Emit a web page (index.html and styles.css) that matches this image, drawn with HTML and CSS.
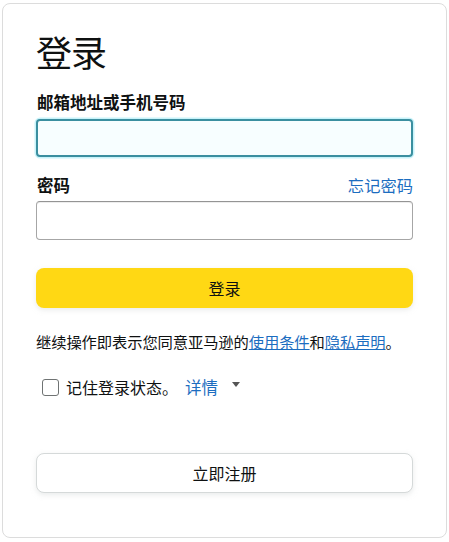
FILE: index.html
```html
<!DOCTYPE html>
<html lang="zh-CN">
<head>
<meta charset="utf-8">
<title>登录</title>
<link rel="stylesheet" href="styles.css">
</head>
<body>
<div class="card">
  <h1 class="title">登录</h1>
  <div class="field">
    <label class="label">邮箱地址或手机号码</label>
    <div class="input input-focus"></div>
  </div>
  <div class="field field-pw">
    <div class="label-row">
      <label class="label">密码</label>
      <a class="link forgot">忘记密码</a>
    </div>
    <div class="input"></div>
  </div>
  <div class="btn-primary">登录</div>
  <p class="terms">继续操作即表示您同意亚马逊的<a class="link ul">使用条件</a>和<a class="link ul">隐私声明</a>。</p>
  <div class="remember">
    <span class="checkbox"></span>
    <span class="remember-text">记住登录状态。</span>
    <a class="link details">详情</a>
    <span class="caret"></span>
  </div>
  <div class="btn-secondary">立即注册</div>
</div>
</body>
</html>
```

FILE: styles.css
```css
* { box-sizing: border-box; }
html, body { margin: 0; padding: 0; background: #fff; }
body {
  font-family: "Noto Sans CJK SC", "Noto Sans", sans-serif;
  color: #0f1111;
}
.card {
  margin: 3px 0 0 2px;
  width: 445px;
  height: 535px;
  border: 1px solid #dcdcdc;
  border-radius: 8px;
  padding: 24px 33px 0 33px;
  display: flex;
  flex-direction: column;
}
.title {
  margin: 0;
  font-size: 36px;
  font-weight: 400;
  line-height: 46px;
  height: 46px;
  letter-spacing: -1px;
}
.field { display: flex; flex-direction: column; }
.label {
  font-size: 16.5px;
  font-weight: 700;
  line-height: 22px;
  margin-top: 17px;
  display: block;
  padding-left: 1px;
}
.label-row {
  display: flex;
  justify-content: space-between;
  align-items: baseline;
  margin-top: 17px;
}
.label-row .label { margin-top: 0; }
.input {
  height: 39px;
  margin-top: 5px;
  border: 1px solid #a6a6a6;
  border-top-color: #949494;
  border-radius: 4px;
  background: #fff;
  box-shadow: 0 1px 0 rgba(0,0,0,.07) inset;
}
.input-focus {
  height: 38px;
  margin-top: 6px;
  border: 2px solid #3b8fa0;
  background: #f7feff;
  box-shadow: 0 0 0 1.5px #c8f3fa;
}
.link { color: #1c6dc0; text-decoration: none; }
.forgot { font-size: 16.3px; line-height: 22px; }
.btn-primary {
  margin-top: 28px;
  height: 40px;
  border-radius: 8px;
  background: #ffd814;
  box-shadow: 0 2px 5px rgba(213,217,217,.5);
  display: flex;
  align-items: center;
  justify-content: center;
  font-size: 16px;
}
.terms {
  margin: 22px 0 0;
  font-size: 15.3px;
  line-height: 22px;
  letter-spacing: -0.1px;
}
.ul { text-decoration: underline; }
.remember {
  margin-top: 24px;
  display: flex;
  align-items: center;
  padding-left: 6px;
  font-size: 16px;
  line-height: 22px;
}
.checkbox {
  width: 17px;
  height: 17px;
  border: 1px solid #6f7373;
  border-radius: 3px;
  background: #fff;
}
.remember-text { margin-left: 7px; }
.details { margin-left: 7px; font-size: 16.5px; }
.caret {
  margin-left: 14px;
  width: 0;
  height: 0;
  border-left: 4px solid transparent;
  border-right: 4px solid transparent;
  border-top: 5px solid #555;
  margin-top: -6px;
}
.btn-secondary {
  margin-top: 55px;
  height: 40px;
  border: 1px solid #d5d9d9;
  border-radius: 8px;
  background: #fff;
  box-shadow: 0 2px 5px rgba(213,217,217,.5);
  display: flex;
  align-items: center;
  justify-content: center;
  font-size: 16px;
}
```
